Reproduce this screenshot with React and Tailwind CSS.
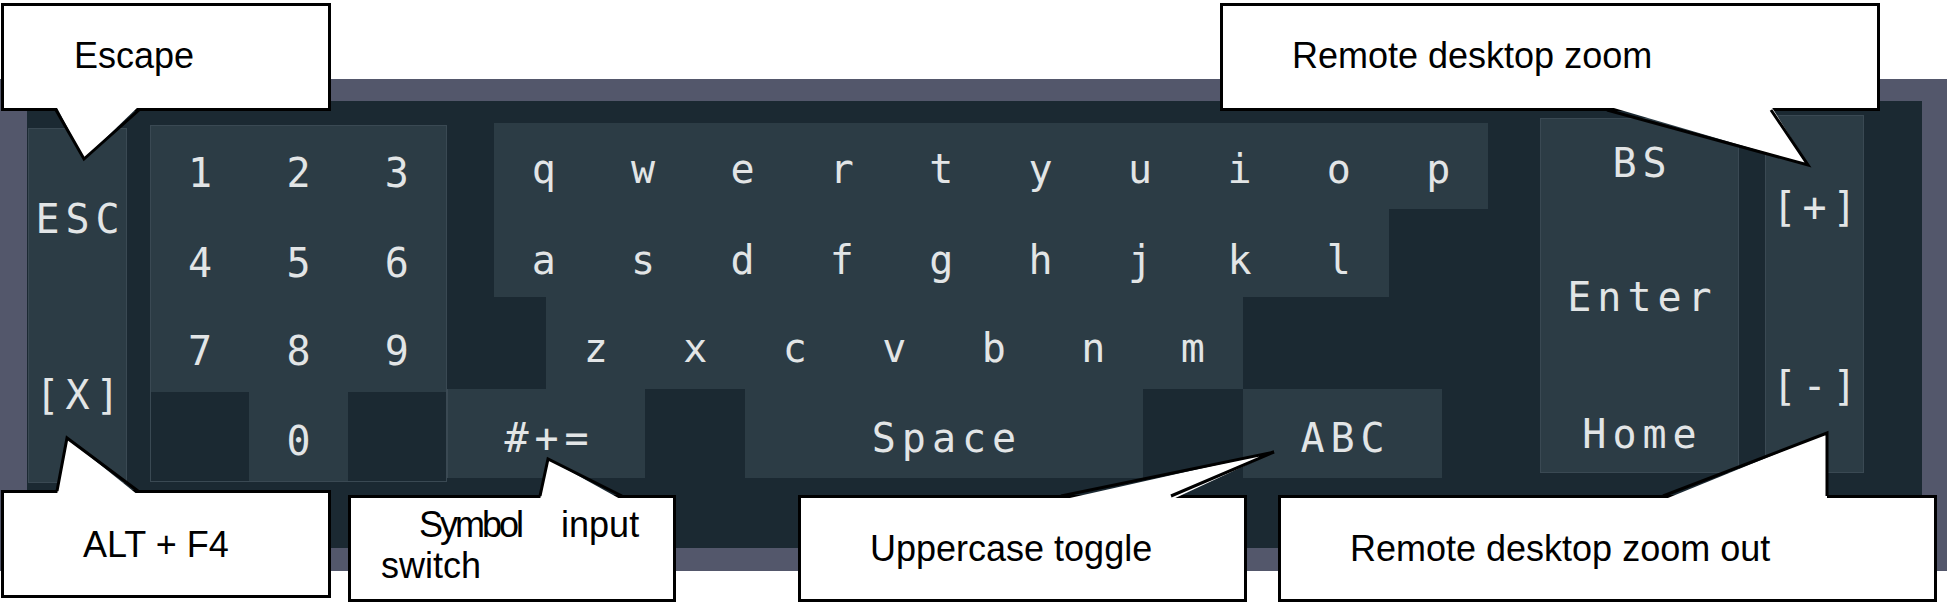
import React from 'react';

const label =
  "font-['DejaVu_Sans_Mono','Liberation_Mono',monospace] text-[40px] leading-[40px] tracking-[6px] pl-[6px] text-[#e2e5e6] whitespace-nowrap";

const callout =
  "absolute bg-white border-[3px] border-black flex items-center text-[36px] leading-[41px] text-black font-['Liberation_Sans',Arial,sans-serif] whitespace-nowrap";

const row1 = ['q', 'w', 'e', 'r', 't', 'y', 'u', 'i', 'o', 'p'];
const row2 = ['a', 's', 'd', 'f', 'g', 'h', 'j', 'k', 'l'];
const row3 = ['z', 'x', 'c', 'v', 'b', 'n', 'm'];

function Key({ children, className }) {
  return (
    <div className={`flex justify-center bg-[#2c3c45] ${className}`}>
      <span className={label}>{children}</span>
    </div>
  );
}

// speech-bubble tails, drawn over the boxes so the base hides the border
const tails = [
  { fill: '56,106 139,106 84,159', line: '56,110 84,159 139,110' },
  { fill: '1607,106 1771,106 1808,165', line: '1607,110 1808,165 1771,110' },
  { fill: '57,495 138,495 67,438', line: '57,491 67,438 138,491' },
  { fill: '540,500 622,500 548,459', line: '540,496 548,459 622,496' },
  { fill: '1061,500 1171,500 1274,452', line: '1061,496 1274,452 1171,496' },
  { fill: '1663,500 1827,500 1827,433', line: '1663,496 1827,433 1827,496' },
];

export default function App() {
  return (
    <div className="relative w-[1952px] h-[614px] bg-white overflow-hidden">
      {/* Keyboard frame */}
      <div className="pt-[79px]">
        <div className="w-[1947px] h-[492px] bg-[#53576b] pl-[27px] pr-[25px] pt-[22px] pb-[23px]">
          <div className="h-full bg-[#1b2932] flex items-start pl-[1px]">
            {/* ESC / close column */}
            <div className="mt-[27px] w-[99px] h-[355px] shrink-0 bg-[#2c3c45] border border-[#3a4953] flex flex-col items-center pt-[70px]">
              <span className={label}>ESC</span>
              <span className={`${label} mt-[136px]`}>[X]</span>
            </div>

            {/* Numpad */}
            <div className="ml-[23px] mt-[24px] w-[297px] h-[357px] shrink-0 bg-[#2c3c45] border border-[#3a4953] flex flex-col">
              <div className="grid grid-cols-3 h-[86px]">
                <Key className="pt-[27px]">1</Key>
                <Key className="pt-[27px]">2</Key>
                <Key className="pt-[27px]">3</Key>
              </div>
              <div className="grid grid-cols-3 h-[88px]">
                <Key className="pt-[31px]">4</Key>
                <Key className="pt-[31px]">5</Key>
                <Key className="pt-[31px]">6</Key>
              </div>
              <div className="grid grid-cols-3 h-[92px]">
                <Key className="pt-[31px]">7</Key>
                <Key className="pt-[31px]">8</Key>
                <Key className="pt-[31px]">9</Key>
              </div>
              <div className="grid grid-cols-3 flex-1">
                <div className="bg-[#1b2932]" />
                <Key className="pt-[29px]">0</Key>
                <div className="bg-[#1b2932]" />
              </div>
            </div>

            {/* Letters */}
            <div className="mt-[22px] w-[1093px] h-[355px] shrink-0 flex flex-col">
              <div className="flex h-[86px]">
                <div className="w-[47px] shrink-0" />
                {row1.map((k) => (
                  <Key key={k} className="w-[99.4px] shrink-0 pt-[26px]">{k}</Key>
                ))}
              </div>
              <div className="flex h-[88px]">
                <div className="w-[47px] shrink-0" />
                {row2.map((k) => (
                  <Key key={k} className="w-[99.4px] shrink-0 pt-[31px]">{k}</Key>
                ))}
              </div>
              <div className="flex h-[92px]">
                <div className="w-[99px] shrink-0" />
                {row3.map((k) => (
                  <Key key={k} className="w-[99.5px] shrink-0 pt-[31px]">{k}</Key>
                ))}
              </div>
              <div className="flex h-[89px]">
                <Key className="w-[198px] shrink-0 pt-[29px] border-l border-[#3a4953]">#+=</Key>
                <div className="w-[100px] shrink-0" />
                <Key className="w-[398px] shrink-0 pt-[29px]">Space</Key>
                <div className="w-[100px] shrink-0" />
                <Key className="w-[199px] shrink-0 pt-[29px]">ABC</Key>
              </div>
            </div>

            {/* BS / Enter / Home */}
            <div className="mt-[17px] w-[199px] h-[355px] shrink-0 bg-[#2c3c45] border border-[#3a4953] flex flex-col items-center pt-[24px]">
              <span className={label}>BS</span>
              <span className={`${label} mt-[94px]`}>Enter</span>
              <span className={`${label} mt-[97px]`}>Home</span>
            </div>

            {/* Zoom */}
            <div className="ml-[26px] mt-[14px] w-[99px] h-[358px] shrink-0 bg-[#2c3c45] border border-[#3a4953] flex flex-col items-center pt-[71px]">
              <span className={label}>[+]</span>
              <span className={`${label} mt-[139px]`}>[-]</span>
            </div>
          </div>
        </div>
      </div>

      {/* Callouts */}
      <div className={`${callout} left-[1px] top-[3px] w-[330px] h-[108px] pl-[70px] pb-[4px]`}>Escape</div>
      <div className={`${callout} left-[1220px] top-[3px] w-[660px] h-[108px] pl-[69px] pb-[4px]`}>
        Remote desktop zoom
      </div>
      <div className={`${callout} left-[1px] top-[490px] w-[330px] h-[108px] pl-[79px]`}>ALT + F4</div>
      <div className={`${callout} left-[348px] top-[495px] w-[328px] h-[107px] flex-col !items-start pt-[6px] pl-[30px]`}>
        <p className="pl-[38px]">
          <span className="tracking-[-3px]">Symbol</span> <span className="ml-[30px]">input</span>
        </p>
        <p>switch</p>
      </div>
      <div className={`${callout} left-[798px] top-[495px] w-[449px] h-[107px] pl-[69px]`}>Uppercase toggle</div>
      <div className={`${callout} left-[1278px] top-[495px] w-[659px] h-[107px] pl-[69px]`}>
        Remote desktop zoom out
      </div>

      <svg className="absolute inset-0 pointer-events-none" width="1952" height="614">
        {tails.map((t, i) => (
          <g key={i}>
            <polygon points={t.fill} fill="#fff" />
            <polyline points={t.line} fill="none" stroke="#000" strokeWidth="3" strokeLinejoin="miter" />
          </g>
        ))}
      </svg>
    </div>
  );
}
